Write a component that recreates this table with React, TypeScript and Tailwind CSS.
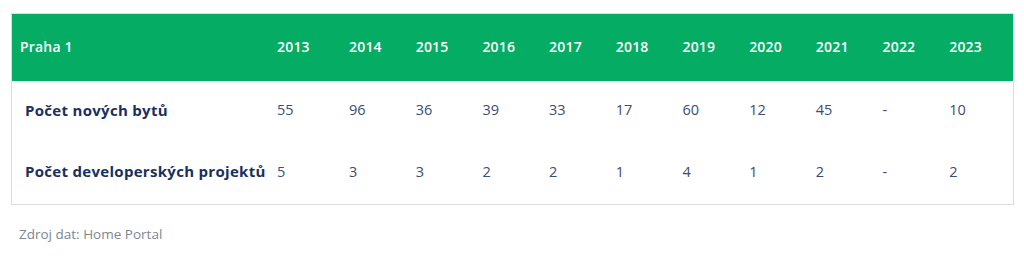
import React from "react";

const years = ["2013","2014","2015","2016","2017","2018","2019","2020","2021","2022","2023"];
const rows: { label: string; values: string[]; h: string }[] = [
  { label: "Počet nových bytů", values: ["55","96","36","39","33","17","60","12","45","-","10"], h: "h-[58px]" },
  { label: "Počet developerských projektů", values: ["5","3","3","2","2","1","4","1","2","-","2"], h: "h-[65px]" },
];

const grid = "grid grid-cols-[257px_72px_repeat(9,66.7px)_1fr]";

export default function App() {
  return (
    <div className="w-[1024px] h-[256px] bg-white pt-[13px] px-[11px]" style={{ fontFamily: '"Open Sans", "Noto Sans", sans-serif' }}>
      <div className="border border-[#dcdcdc] w-[1003px]">
        <div className={`${grid} h-[67px] items-center bg-[#04ac64] text-white font-semibold text-[14px] tracking-[0.2px]`}>
          <div className="pl-[8px] pb-[2px]">Praha 1</div>
          {years.map((y) => (
            <div key={y} className="pl-[8px] pb-[2px]">{y}</div>
          ))}
        </div>
        {rows.map((r) => (
          <div key={r.label} className={`${grid} ${r.h} items-center`}>
            <div className="pl-[13px] font-bold text-[15px] tracking-[0.3px] text-[#1a2f5e] whitespace-nowrap">{r.label}</div>
            {r.values.map((v, i) => (
              <div key={i} className="pl-[8px] text-[14.5px] text-[#3a4d74]">{v}</div>
            ))}
          </div>
        ))}
      </div>
      <div className="pl-[8px] mt-[19px] text-[13.5px] text-[#7d8692]">Zdroj dat: Home Portal</div>
    </div>
  );
}
